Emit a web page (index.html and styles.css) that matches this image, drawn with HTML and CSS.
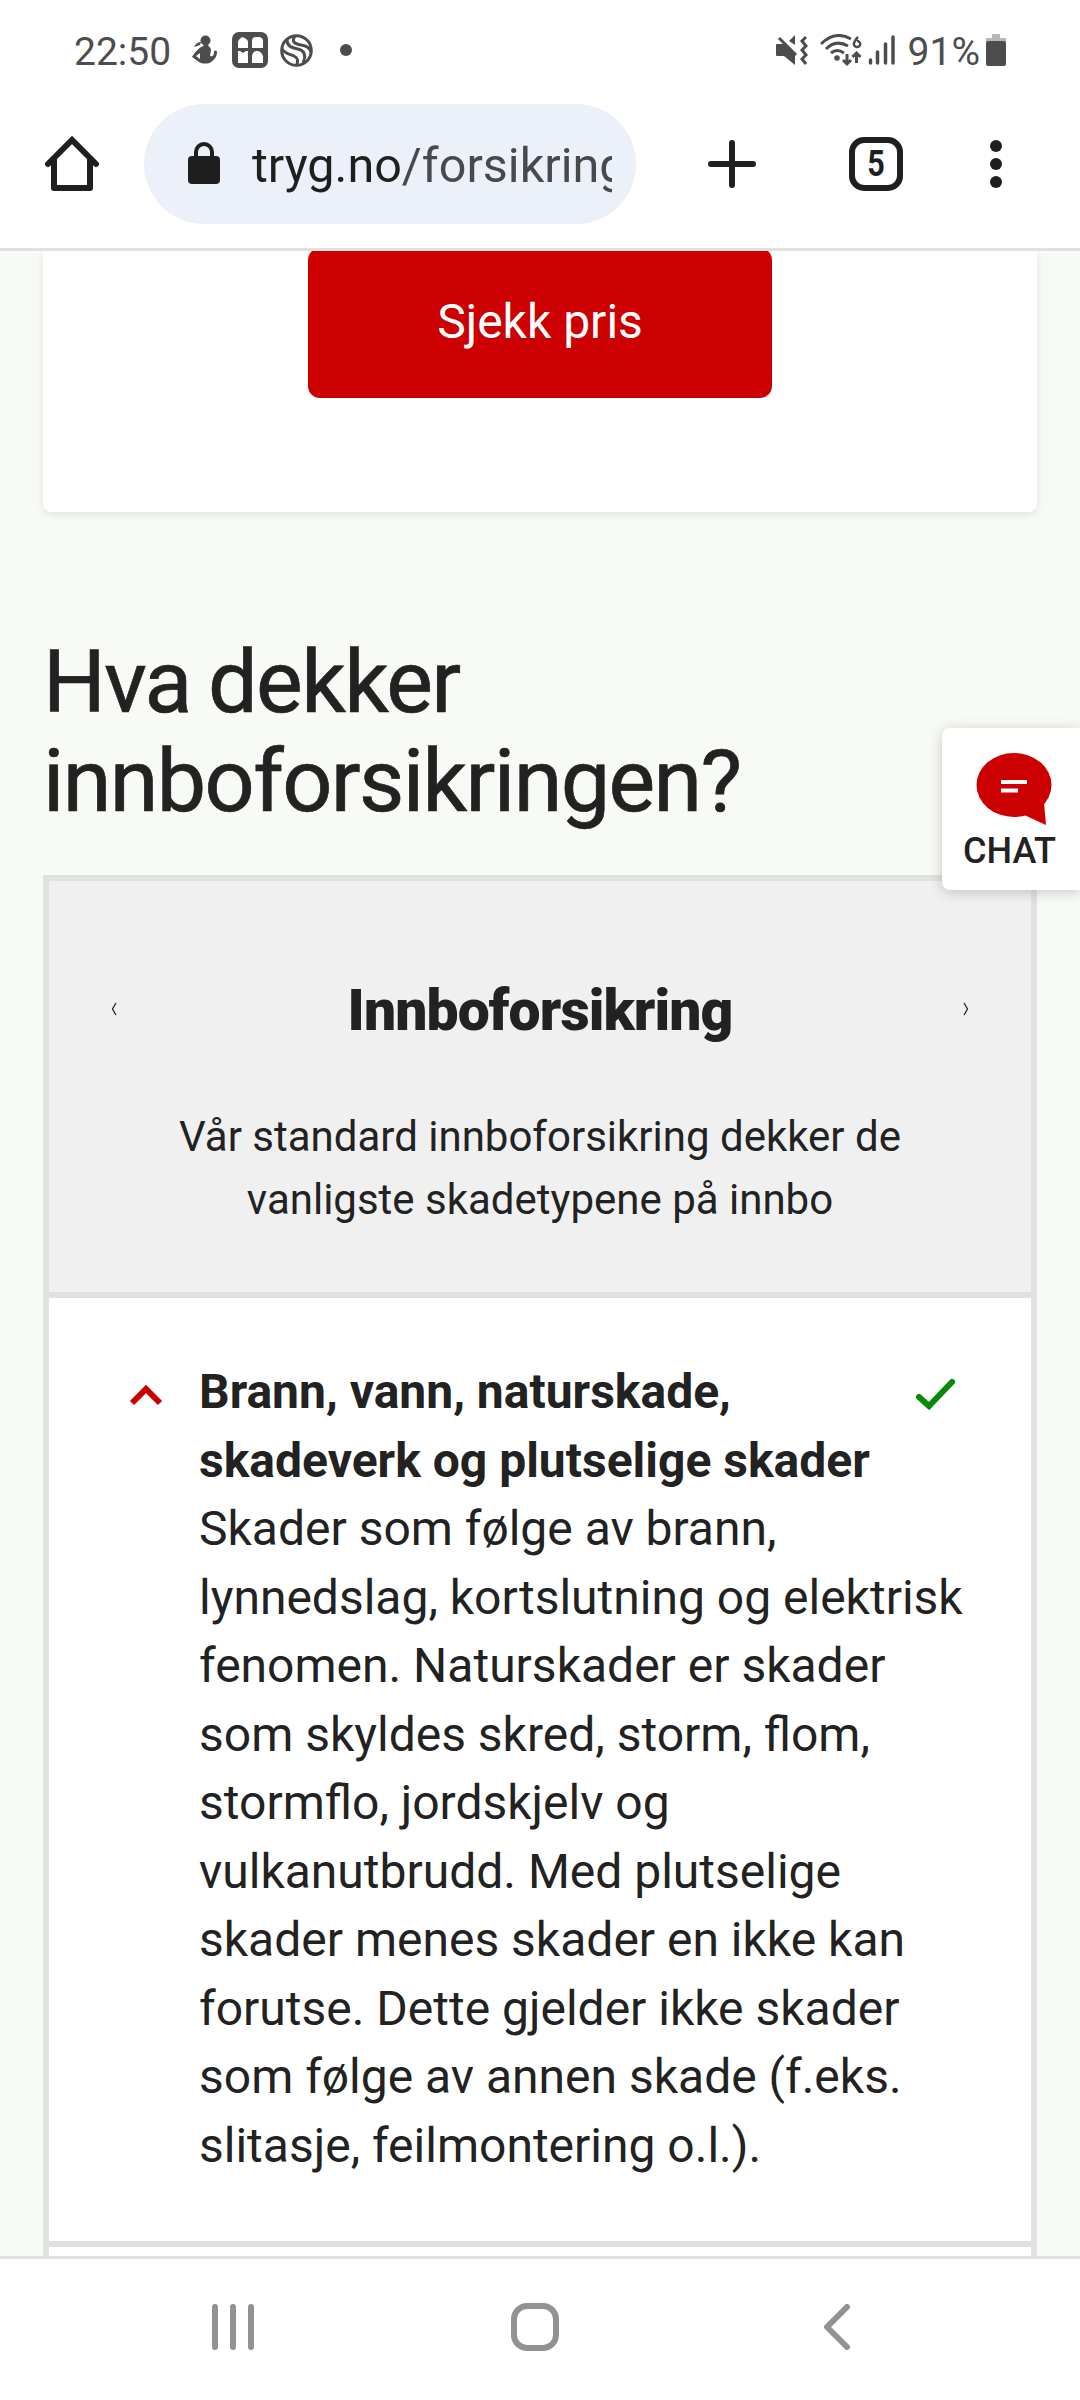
FILE: index.html
```html
<!DOCTYPE html>
<html lang="no">
  <head>
    <meta charset="UTF-8" />
    <meta name="viewport" content="width=device-width, initial-scale=1.0" />
    <title>Innboforsikring</title>
    <link rel="stylesheet" href="styles.css">
  </head>
  <body>
    <div class="statusbar">
      <span class="time">22:50</span>
      <svg class="icon-person" width="26" height="30" viewBox="0 0 26 30">
        <circle cx="13.500" cy="5.500" r="5" />
        <path d="M2 12c1-3 4-5 7-5l-1 3z" />
        <path d="M9 12c2-1 3-1 3-3h4c0 3 3 3 3 6l-1 6c3 1 4-1 4-4 0-2 3-2 3 0 0 5-3 8-6 10-2 2-9 2-12 0L0 22c3-5 6-8 9-10zM4 21l4 3 0-6z" fill-rule="evenodd" />
      </svg>
      <svg class="icon-grid" width="36" height="36" viewBox="0 0 36 36">
        <rect width="36" height="36" rx="7" />
        <path fill="#fff" d="M6 16V10q0-2 4-5 6 2 6 5v6zM20 16V9q0-4 4-4h2q5 0 5 4v7zM6 19h2l3 2 3-2h2v12H6zM20 31V24q1-5 5-5t6 5v7z" />
      </svg>
      <svg class="icon-ball" width="33" height="33" viewBox="0 0 33 33" fill="none" stroke="#4d4d4d" stroke-width="3">
        <circle cx="16.500" cy="16.500" r="14.800" />
        <path d="M15 2c-4 6 0 8 6 9s9 3 10 7M7 6c0 7 6 8 11 9s9 5 5 14M2 15c3 5 8 5 12 7 4 2 4 4 3 9" />
      </svg>
      <span class="more-dot"></span>
      <svg class="icon-mute" width="33" height="31" viewBox="0 0 33 31">
        <path d="M1 9h7l11 11v10L8 21H1q-1 0-1-1v-10q0-1 1-1zM13 6l6-6v10z" />
        <path d="M3 3l17 17M30 2l-4 4 4 5-4 4 4 5-4 4 4 5" fill="none" stroke="#4d4d4d" stroke-width="3" />
      </svg>
      <svg class="icon-wifi" width="43" height="33" viewBox="0 0 43 33" fill="none" stroke="#4d4d4d" stroke-width="3">
        <path d="M1 10Q15-4 31 5M6 15q10-10 22-3M11 19q6-5 13 0M27 20v10M23 26l4 4 4-4M36.500 29V19M32.500 23l4-4 4 4" />
        <path d="M38 3q-3 3-4 6a3.200 3 0 1 0 3-2" stroke-width="2.500" />
        <circle cx="17" cy="24" r="1.300" />
      </svg>
      <svg class="icon-signal" width="28" height="30" viewBox="0 0 28 30" stroke="#4d4d4d" stroke-width="3.500" stroke-linecap="round">
        <path d="M2.500 25v3M9.500 17v11M17.500 9v19M25 2v26" />
      </svg>
      <span class="percent">91%</span>
      <svg class="icon-battery" width="20" height="32" viewBox="0 0 20 32">
        <path fill="#b8b8b8" d="M6 0h8v4h6v4H0V4h6z" />
        <rect y="7" width="20" height="25" rx="2" />
      </svg>
    </div>

    <div class="toolbar">
      <svg class="home" width="56" height="56" viewBox="0 0 56 56" fill="none" stroke="#1f1f1f" stroke-width="6" stroke-linecap="round" stroke-linejoin="round">
        <path d="M4 28L28 4l24 24" stroke-linejoin="miter" />
        <path d="M10 24v28h36V24" />
      </svg>
      <div class="address">
        <svg class="lock" width="32" height="42" viewBox="0 0 32 42">
          <rect y="14" width="32" height="28" rx="4" />
          <path d="M8 16v-6a8 8 0 0 1 16 0v6" fill="none" stroke="#1f1f1f" stroke-width="4" />
        </svg>
        <div class="url">tryg.no<span>/forsikring</span></div>
      </div>
      <svg class="plus" width="48" height="48" viewBox="0 0 48 48" stroke="#1f1f1f" stroke-width="6" stroke-linecap="round">
        <path d="M24 3v42M3 24h42" />
      </svg>
      <div class="tabs"><span>5</span></div>
      <div class="menu"><i></i><i></i><i></i></div>
    </div>

    <main class="page">
      <div class="price-card">
        <button class="price-button">Sjekk pris</button>
      </div>

      <h1>Hva dekker<br>innboforsikringen?</h1>

      <section class="coverage">
        <div class="coverage-header">
          <div class="slider">
            <svg width="6" height="14" viewBox="0 0 6 14" fill="none" stroke="#222" stroke-width="1.300"><path d="M5 1L1.500 7 5 13" /></svg>
            <h2>Innboforsikring</h2>
            <svg width="6" height="14" viewBox="0 0 6 14" fill="none" stroke="#222" stroke-width="1.300"><path d="M1 1l3.500 6L1 13" /></svg>
          </div>
          <p>Vår standard innboforsikring dekker de<br>vanligste skadetypene på innbo</p>
        </div>
        <div class="coverage-item">
          <svg class="caret" width="34" height="24" viewBox="0 0 34 24" fill="none" stroke="#cc0000" stroke-width="6"><path d="M3 20L17 6l14 14" /></svg>
          <div class="text">
            <strong>Brann, vann, naturskade,<br>skadeverk og plutselige skader</strong>
            <p>Skader som følge av brann,<br>lynnedslag, kortslutning og elektrisk<br>fenomen. Naturskader er skader<br>som skyldes skred, storm, flom,<br>stormflo, jordskjelv og<br>vulkanutbrudd. Med plutselige<br>skader menes skader en ikke kan<br>forutse. Dette gjelder ikke skader<br>som følge av annen skade (f.eks.<br>slitasje, feilmontering o.l.).</p>
          </div>
          <svg class="check" width="42" height="32" viewBox="0 0 42 32" fill="none" stroke="#078a07" stroke-width="6" stroke-linecap="round"><path d="M4 19l10 9L37 4" /></svg>
        </div>
        <div class="coverage-item"></div>
      </section>

      <div class="chat">
        <svg width="76" height="74" viewBox="0 0 76 74">
          <ellipse cx="38" cy="33" rx="37.500" ry="32" fill="#cc0000" />
          <path d="M46 62l24 11-2-22z" fill="#cc0000" />
          <path d="M25 28h26v4H25zM25 36.500h17v4H25z" fill="#fff" />
        </svg>
        <span>CHAT</span>
      </div>
    </main>

    <nav class="navbar">
      <svg class="recent" width="42" height="46" viewBox="0 0 42 46"><path d="M3 3v40M21 3v40M39 3v40" /></svg>
      <svg class="nav-home" width="48" height="48" viewBox="0 0 48 48"><rect x="3" y="3" width="42" height="42" rx="13" /></svg>
      <svg class="back" width="28" height="46" viewBox="0 0 28 46"><path d="M24 3L4 23l20 20" /></svg>
    </nav>
  </body>
</html>
```
FILE: styles.css
```css
* {
    box-sizing: border-box;
}
body {
    font-family: Roboto, sans-serif;
    background-color: #fff;
    color: #222;
    margin: 0;
    width: 1080px;
    height: 2400px;
    overflow: hidden;
    display: flex;
    flex-direction: column;
}
svg {
    display: block;
    flex: none;
}
h1, h2, p {
    margin: 0;
}

/* status bar */
.statusbar {
    height: 90px;
    flex: none;
    display: flex;
    align-items: center;
    padding: 10px 74px 0 74px;
    color: #4d4d4d;
    fill: #4d4d4d;
    font-size: 39px;
}
.time {
    width: 118px;
}
.time, .percent {
    line-height: 60px;
    margin-top: 3px;
}
.icon-grid {
    margin-left: 14px;
}
.icon-ball {
    margin-left: 12px;
}
.more-dot {
    width: 12px;
    height: 12px;
    border-radius: 50%;
    background: #4d4d4d;
    margin-left: 27px;
}
.icon-mute {
    margin-left: auto;
}
.icon-wifi {
    margin-left: 11px;
}
.icon-signal {
    margin-left: 5px;
}
.percent {
    margin-left: 12px;
}
.icon-battery {
    margin-left: 6px;
}

/* browser toolbar */
.toolbar {
    height: 161px;
    flex: none;
    display: flex;
    align-items: center;
    padding: 0 78px 10px 44px;
    border-bottom: 3px solid #e0e0e0;
    color: #1f1f1f;
}
.address {
    width: 492px;
    height: 120px;
    border-radius: 60px;
    background: #ecf0f9;
    margin-left: 44px;
    padding: 0 24px 0 44px;
    display: flex;
    align-items: center;
}
.lock {
    fill: #1f1f1f;
    margin-top: -2px;
}
.url {
    font-size: 48.500px;
    margin-left: 32px;
    margin-top: 2px;
    flex: 1;
    overflow: hidden;
    white-space: nowrap;
}
.url span {
    color: #474a4d;
}
.plus {
    margin-left: 72px;
}
.tabs {
    width: 54px;
    height: 54px;
    border: 6px solid #1f1f1f;
    border-radius: 15px;
    margin-left: 93px;
    font-size: 36px;
    font-weight: 700;
    line-height: 42px;
    text-align: center;
}
.tabs span {
    display: block;
    transform: scaleX(0.85);
}
.menu {
    margin-left: auto;
    display: flex;
    flex-direction: column;
    gap: 6px;
}
.menu i {
    width: 12px;
    height: 12px;
    border-radius: 50%;
    background: #1f1f1f;
}

/* page */
.page {
    position: relative;
    flex: 1;
    min-height: 0;
    overflow: hidden;
    background: #f8faf5;
    padding: 0 43px;
}
.price-card {
    height: 261px;
    background: #fff;
    border-radius: 0 0 8px 8px;
    box-shadow: 0 2px 9px rgba(0, 0, 0, 0.1);
}
.price-button {
    display: block;
    width: 464px;
    height: 150px;
    margin: 0 auto;
    position: relative;
    top: -3px;
    border: none;
    border-radius: 12px;
    background: #cc0000;
    color: #fff;
    font-family: inherit;
    font-size: 48px;
    padding: 0 0 4px;
}
h1 {
    font-size: 88px;
    font-weight: 400;
    line-height: 99px;
    letter-spacing: -1.600px;
    word-spacing: -3px;
    -webkit-text-stroke: 0.7px #222;
    margin-top: 120px;
    white-space: nowrap;
}
.coverage {
    border: 6px solid #e0e2e1;
    margin-top: 45px;
    background: #fff;
}
.coverage-header {
    height: 417px;
    background: #f0f0f0;
    border-bottom: 6px solid #e0e0e0;
    padding: 92px 62px 0;
    text-align: center;
}
.slider {
    display: flex;
    justify-content: space-between;
    align-items: center;
}
.slider svg {
    margin-top: -4px;
}
h2 {
    font-size: 57px;
    font-weight: 900;
    line-height: 76px;
    letter-spacing: -0.900px;
}
.coverage-header p {
    font-size: 42px;
    line-height: 63px;
    margin-top: 56px;
}
.coverage-item {
    height: 949px;
    border-bottom: 6px solid #e0e0e0;
    padding: 60px 74px 0 80px;
    display: flex;
    align-items: flex-start;
    font-size: 48px;
    line-height: 68.500px;
}
.caret {
    margin-top: 25px;
}
.text {
    margin-left: 36px;
    white-space: nowrap;
    width: 700px;
}
.check {
    margin-top: 20px;
    margin-left: auto;
}
.chat {
    position: absolute;
    right: 0;
    top: 477px;
    width: 138px;
    height: 162px;
    background: #fff;
    border-radius: 8px 0 0 8px;
    box-shadow: 0 2px 14px rgba(0, 0, 0, 0.2);
    padding: 24px 3px 0 0;
    display: flex;
    flex-direction: column;
    align-items: center;
    font-size: 36px;
    font-weight: 500;
}
.chat svg {
    margin-left: 9px;
}
.chat span {
    line-height: 42px;
    margin-top: 4px;
}

/* android navigation */
.navbar {
    height: 144px;
    flex: none;
    border-top: 3px solid #e0e0e0;
    display: flex;
    align-items: center;
    padding: 0 229px 5px 212px;
    justify-content: space-between;
    fill: none;
    stroke: #929292;
    stroke-width: 6;
    stroke-linecap: round;
    stroke-linejoin: round;
}
.nav-home {
    margin-right: 8px;
}
```
